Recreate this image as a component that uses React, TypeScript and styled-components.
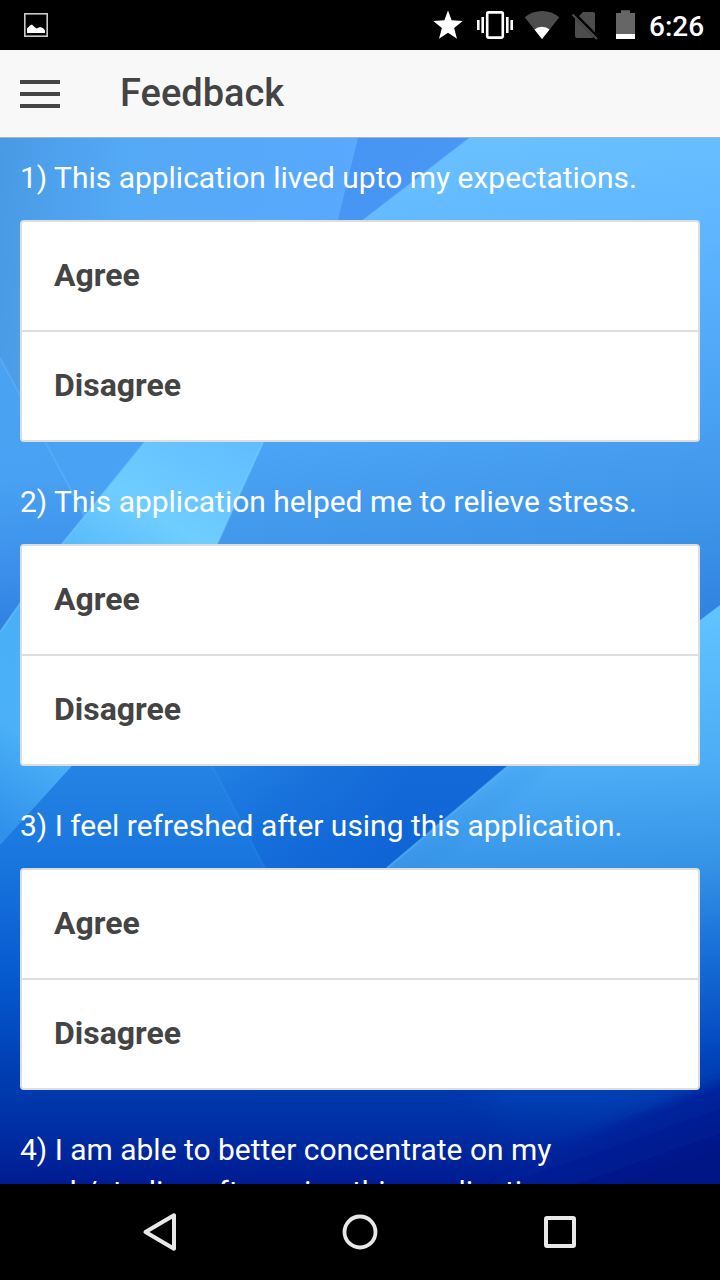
import React from "react";
import styled, { createGlobalStyle } from "styled-components";

const GlobalStyle = createGlobalStyle`
  * { box-sizing: border-box; }
  body { margin: 0; background: #000; font-family: Roboto, "Liberation Sans", sans-serif; }
  svg { display: block; flex: none; }
`;

const Screen = styled.div`
  width: 720px;
  height: 1280px;
  display: flex;
  flex-direction: column;
  overflow: hidden;
  background: #000;
`;

const StatusBar = styled.div`
  flex: none;
  height: 50px;
  display: flex;
  align-items: center;
  justify-content: space-between;
  padding: 0 0 0 24px;
`;

const StatusIcons = styled.div`
  display: flex;
  align-items: center;
  width: 293px;
`;

const Clock = styled.span`
  padding: 3px 0 0 4px;
  color: #fff;
  font-size: 28px;
  line-height: 33px;
  font-weight: 500;
`;

const Header = styled.header`
  flex: none;
  height: 88px;
  display: flex;
  align-items: center;
  gap: 60px;
  padding-left: 20px;
  background: #f8f8f8;
  border-bottom: 1px solid #b2b2b2;
`;

const MenuButton = styled.button`
  width: 40px;
  height: 28px;
  padding: 0;
  border: 0;
  background: none;
  display: flex;
  flex-direction: column;
  justify-content: space-between;
  margin-top: 1px;
`;

const MenuBar = styled.span`
  height: 4px;
  background: #444;
`;

const Title = styled.h1`
  margin: 0;
  padding-bottom: 2px;
  color: #444;
  font-size: 38px;
  line-height: 46px;
  font-weight: 500;
`;

const Content = styled.main`
  flex: none;
  height: 1046px;
  display: grid;
  grid-template: 1046px / 720px;
  overflow: hidden;
`;

const Wallpaper = styled.svg`
  grid-area: 1 / 1;
`;

const Survey = styled.div`
  grid-area: 1 / 1;
  z-index: 1;
  padding: 19px 20px 0;
`;

const Question = styled.section`
  margin-bottom: 39px;
`;

const Prompt = styled.p`
  margin: 0 0 21px;
  color: #fff;
  font-size: 29.96px;
  line-height: 42px;
`;

const Options = styled.div`
  border: 2px solid #ddd;
  border-radius: 4px;
  background: #fff;
`;

const Option = styled.div`
  height: 108px;
  padding: 0 32px 2px;
  display: flex;
  align-items: center;
  color: #444;
  font-size: 32px;
  font-weight: 700;

  & + & {
    height: 110px;
    border-top: 2px solid #ddd;
  }
`;

const NavBar = styled.nav`
  flex: none;
  height: 96px;
  display: flex;
  align-items: center;
  justify-content: center;
  gap: 160px;
`;

const answers = ["Agree", "Disagree"];

const questions = [
  { text: "1) This application lived upto my expectations.", options: answers },
  { text: "2) This application helped me to relieve stress.", options: answers },
  { text: "3) I feel refreshed after using this application.", options: answers },
  { text: "4) I am able to better concentrate on my work/studies after using this application.", options: [] },
];

type Stop = [number, string, number?];

const Gradient = ({ id, from, to, stops }: { id: string; from: [number, number]; to: [number, number]; stops: Stop[] }) => (
  <linearGradient id={id} gradientUnits="userSpaceOnUse" x1={from[0]} y1={from[1]} x2={to[0]} y2={to[1]}>
    {stops.map(([at, color, opacity = 1]) => (
      <stop key={at} offset={at} stopColor={color} stopOpacity={opacity} />
    ))}
  </linearGradient>
);

const Background = () => (
  <Wallpaper width="720" height="1046" viewBox="0 138 720 1046" aria-hidden="true">
    <defs>
      <Gradient id="upper" from={[0, 138]} to={[350, 160]} stops={[[0, "#499ae5"], [0.35, "#54a9f4"], [1, "#58a9ff"]]} />
      <Gradient id="wedge" from={[340, 138]} to={[440, 220]} stops={[[0, "#4694f3"], [1, "#4898f5"]]} />
      <Gradient id="sky" from={[420, 138]} to={[480, 650]} stops={[[0, "#69c1ff"], [0.2, "#62b8ff"], [0.57, "#4ba3f5"], [0.8, "#3e94e8"], [1, "#2f82e0"]]} />
      <Gradient id="leftmid" from={[0, 380]} to={[20, 630]} stops={[[0, "#4aa2f2"], [0.4, "#48a1f2"], [0.75, "#3d90ea"], [1, "#2f80e2"]]} />
      <Gradient id="beam" from={[240, 430]} to={[0, 830]} stops={[[0, "#61bcff"], [0.25, "#6fcdff"], [0.5, "#48b0f7"], [0.8, "#4bb0f8"], [1, "#2f91ea"]]} />
      <Gradient id="deep" from={[80, 760]} to={[80, 1184]} stops={[[0, "#2584e4"], [0.25, "#1875de"], [0.5, "#065bcf"], [0.78, "#0039b0"], [1, "#001b92"]]} />
      <Gradient id="shade" from={[190, 780]} to={[380, 850]} stops={[[0, "#0859d0", 0], [0.4, "#0859d0", 0.3], [1, "#0859d0", 0.6]]} />
      <Gradient id="right" from={[670, 620]} to={[700, 1160]} stops={[[0, "#60c2ff"], [0.27, "#4cacf5"], [0.45, "#3694e7"], [0.6, "#1a73da"], [0.8, "#0348c0"], [1, "#002da4"]]} />
      <Gradient id="bottom" from={[0, 1040]} to={[0, 1184]} stops={[[0, "#0040b6", 0], [0.35, "#003aae", 1], [0.65, "#002da2", 1], [1, "#001b92", 1]]} />
      <Gradient id="corner" from={[600, 1070]} to={[640, 1184]} stops={[[0, "#0034ad"], [0.55, "#00229a"], [1, "#001486"]]} />
      <filter id="soft" x="-20%" y="-60%" width="140%" height="220%"><feGaussianBlur stdDeviation="18" /></filter>
      <filter id="edge"><feGaussianBlur stdDeviation="4" /></filter>
    </defs>
    <rect y="138" width="720" height="1046" fill="url(#sky)" />
    <path d="M0 138H360L320 300L145 442L0 632Z" fill="url(#upper)" />
    <path d="M358 138H470L338 240H333Z" fill="url(#wedge)" />
    <path d="M470 138L338 240" stroke="#72bdff" strokeWidth="2" opacity=".65" />
    <path d="M0 358L95 535L0 640Z" fill="url(#leftmid)" />
    <path d="M0 358L45 442L150 442L85 520L45 442Z" fill="#49a2f3" />
    <path d="M0 358L87 520" stroke="#68b9ff" strokeWidth="2" opacity=".4" />
    <path d="M145 442L180 400H282L263 442L217 544L72 766L0 846V632L62 544Z" fill="url(#beam)" />
    <path d="M180 400L145 442L62 544L0 632" fill="none" stroke="#79caff" strokeWidth="2" opacity=".5" />
    <path d="M282 400L263 442L217 544" fill="none" stroke="#7bd0ff" strokeWidth="2" opacity=".5" />
    <path d="M72 766L170 650H600L508 766L387 868V1184H0V845Z" fill="url(#deep)" />
    <path d="M202 745H540L380 875H268Z" fill="url(#shade)" />
    <path d="M207 756L270 878" stroke="#3b94ec" strokeWidth="2" opacity=".25" />
    <path d="M720 605V1184H300V948L387 868L508 766Z" fill="url(#right)" />
    <path d="M387 868L508 766L560 722" fill="none" stroke="#62b5fb" strokeWidth="2" opacity=".6" />
    <path d="M388 872L512 766L550 766L420 878Z" fill="#2b82df" opacity=".12" filter="url(#edge)" />
    <path d="M0 1040H720V1184H0Z" fill="url(#bottom)" />
    <path d="M480 1060H720L610 1110L500 1115Z" fill="#004bc0" opacity=".5" filter="url(#soft)" />
    <path d="M760 1064L690 1093L610 1126L540 1157L470 1200H760Z" fill="url(#corner)" filter="url(#edge)" />
  </Wallpaper>
);

const PictureIcon = () => (
  <svg width="24" height="24" viewBox="24 13 24 24">
    <rect x="24.8" y="13.8" width="22.4" height="22.4" fill="none" stroke="#c9cbc9" strokeWidth="1.6" />
    <path d="M27 33V28.5L30 25.5L32 24.5L34.5 27L36.5 28.5L40 27L43 28L45 30.5V33Z" fill="#fff" />
  </svg>
);

const StarIcon = () => (
  <svg width="42" height="50" viewBox="427 0 42 50">
    <path d="M448 10.5L451.6 20.3L462.8 21L454.1 28L457 38.7L448 32.7L439 38.7L441.9 28L433.2 21L444.4 20.3Z" fill="#fff" />
  </svg>
);

const VibrateIcon = () => (
  <svg width="50" height="50" viewBox="469 0 50 50">
    <rect x="487.2" y="12.4" width="15.6" height="25.2" rx="1.5" fill="none" stroke="#fff" strokeWidth="2.6" />
    <path d="M477 20h2.6v10H477zM481.4 17h2.6v16h-2.6zM506 17h2.6v16H506zM510.4 20h2.6v10h-2.6z" fill="#fff" />
  </svg>
);

const WifiIcon = () => (
  <svg width="47" height="50" viewBox="519 0 47 50">
    <path d="M542 39L524.7 17.3Q532.5 11 542 11T559.3 17.3Z" fill="#4d4d4d" />
    <path d="M542 39L534.4 29.4Q537.5 26.8 542 26.8T549.6 29.4Z" fill="#fff" />
  </svg>
);

const NoSimIcon = () => (
  <svg width="41" height="50" viewBox="566 0 41 50">
    <path d="M583 12H593Q595 12 595 14V32.3L579 16ZM575 18.5L593.7 37.3Q593 38 592 38H577Q575 38 575 36Z" fill="#4d4d4d" />
    <path d="M572.5 14.5L597 39" stroke="#4d4d4d" strokeWidth="2.2" />
  </svg>
);

const BatteryIcon = () => (
  <svg width="38" height="50" viewBox="607 0 38 50">
    <path d="M616 13H621V10.2H630V13H635V34H616Z" fill="#666" />
    <path d="M616 34H635V39H616Z" fill="#fff" />
  </svg>
);

const BackIcon = () => (
  <svg width="40" height="40" viewBox="140 1212 40 40">
    <path d="M174 1215.3V1248.7L145.5 1232Z" fill="none" stroke="#e8e8e8" strokeWidth="4" strokeLinejoin="round" />
  </svg>
);

const HomeIcon = () => (
  <svg width="40" height="40" viewBox="0 0 40 40">
    <circle cx="20" cy="20" r="15.5" fill="none" stroke="#e8e8e8" strokeWidth="3.8" />
  </svg>
);

const RecentIcon = () => (
  <svg width="40" height="40" viewBox="0 0 40 40">
    <rect x="6" y="6" width="28" height="28" rx="1" fill="none" stroke="#e8e8e8" strokeWidth="4" />
  </svg>
);

export default function App() {
  return (
    <>
      <GlobalStyle />
      <Screen>
        <StatusBar>
          <PictureIcon />
          <StatusIcons>
            <StarIcon />
            <VibrateIcon />
            <WifiIcon />
            <NoSimIcon />
            <BatteryIcon />
            <Clock>6:26</Clock>
          </StatusIcons>
        </StatusBar>
        <Header>
          <MenuButton aria-label="Menu">
            <MenuBar />
            <MenuBar />
            <MenuBar />
          </MenuButton>
          <Title>Feedback</Title>
        </Header>
        <Content>
          <Background />
          <Survey>
            {questions.map(({ text, options }) => (
              <Question key={text}>
                <Prompt>{text}</Prompt>
                {options.length > 0 && (
                  <Options>
                    {options.map((option) => (
                      <Option key={option}>{option}</Option>
                    ))}
                  </Options>
                )}
              </Question>
            ))}
          </Survey>
        </Content>
        <NavBar>
          <BackIcon />
          <HomeIcon />
          <RecentIcon />
        </NavBar>
      </Screen>
    </>
  );
}
